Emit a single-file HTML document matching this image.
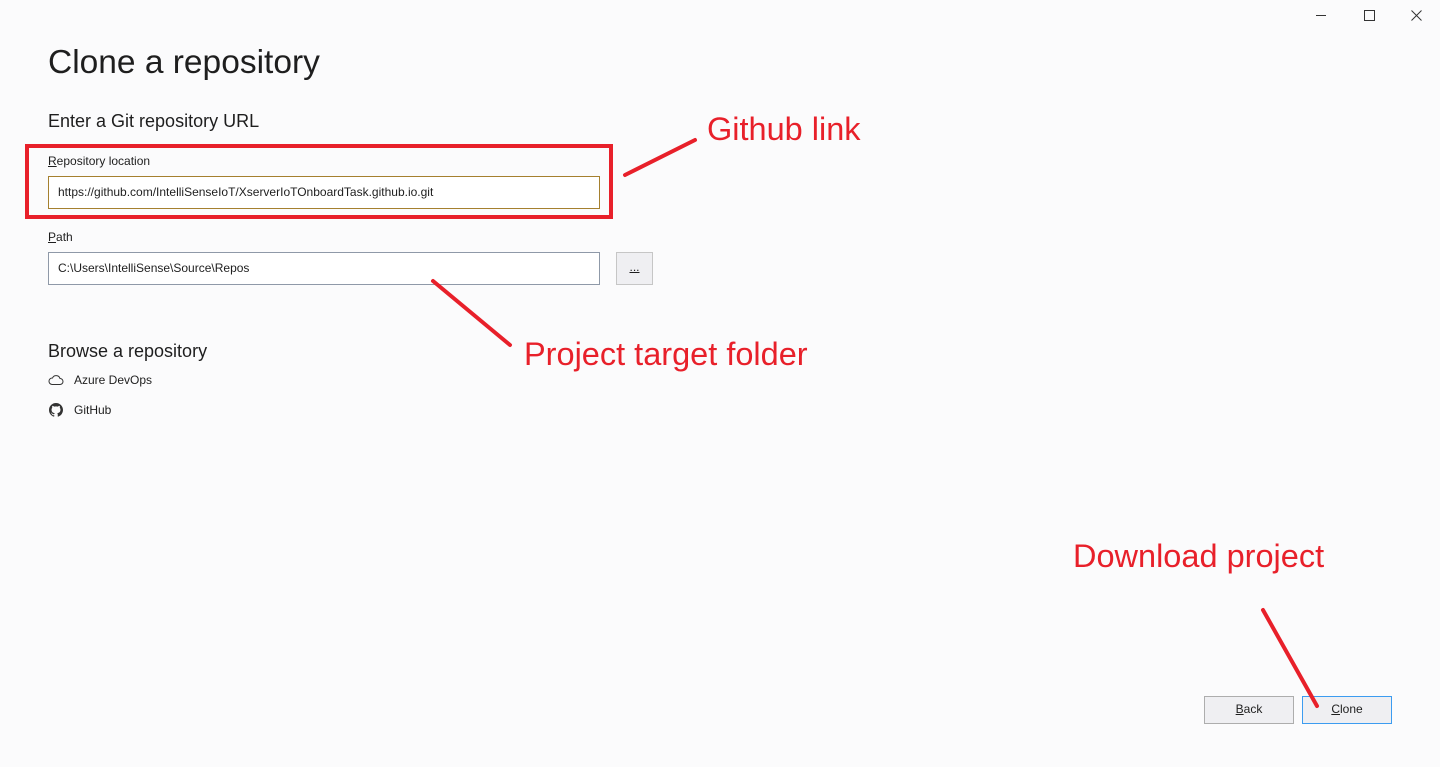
<!DOCTYPE html>
<html><head><style>
body{margin:0;width:1440px;height:767px;background:#fbfbfc;font-family:"Liberation Sans",sans-serif;color:#1e1e1e;position:relative;overflow:hidden}
.a{position:absolute;white-space:nowrap}
.in{position:absolute;background:#fff;box-sizing:border-box;font-size:12px;padding-left:9px;line-height:30px}
.btn{position:absolute;box-sizing:border-box;background:#efeff2;font-size:12px;text-align:center;line-height:25px}
.red{color:#e8202a;font-size:32.5px}
</style></head><body>
<div class="a" style="left:1316px;top:15px;width:10px;border-top:1px solid #333"></div>
<div class="a" style="left:1364px;top:10px;width:9px;height:9px;border:1px solid #333"></div>
<svg class="a" style="left:1411px;top:10px" width="11" height="11"><path d="M0.5 0.5L10.5 10.5M10.5 0.5L0.5 10.5" stroke="#333" stroke-width="1"/></svg>
<div class="a" style="left:48px;top:44px;font-size:33.5px">Clone a repository</div>
<div class="a" style="left:48px;top:111px;font-size:18px">Enter a Git repository URL</div>
<div class="a" style="left:25px;top:144px;width:580px;height:67px;border:4px solid #e8202a"></div>
<div class="a" style="left:48px;top:154px;font-size:12px"><u>R</u>epository location</div>
<div class="in" style="left:48px;top:176px;width:552px;height:33px;border:1px solid #a5802f">https://github.com/IntelliSenseIoT/XserverIoTOnboardTask.github.io.git</div>
<div class="a" style="left:48px;top:230px;font-size:12px"><u>P</u>ath</div>
<div class="in" style="left:48px;top:252px;width:552px;height:33px;border:1px solid #8f99a8">C:\Users\IntelliSense\Source\Repos</div>
<div class="btn" style="left:616px;top:252px;width:37px;height:33px;border:1px solid #c6c6c6;line-height:28px"><u>...</u></div>
<div class="a" style="left:48px;top:341px;font-size:18px">Browse a repository</div>
<svg class="a" style="left:48px;top:374px" width="16" height="12" viewBox="0 0 16 12"><path d="M4 10.5h8a3 3 0 0 0 0-6 4 4 0 0 0-7.5-.5A3.2 3.2 0 0 0 4 10.5z" fill="none" stroke="#333" stroke-width="1"/></svg>
<div class="a" style="left:74px;top:373px;font-size:12px">Azure DevOps</div>
<svg class="a" style="left:49px;top:403px" width="14" height="14" viewBox="0 0 16 16"><path fill="#333" d="M8 0C3.58 0 0 3.580 0 8c0 3.54 2.29 6.53 5.47 7.59.4.07.55-.17.55-.38v-1.330c-2.23.48-2.7-1.07-2.7-1.07-.36-.93-.89-1.17-.89-1.17-.73-.5.06-.49.06-.49.8.06 1.23.83 1.23.83.72 1.22 1.87.87 2.33.66.07-.52.28-.87.51-1.07-1.78-.2-3.65-.89-3.65-3.95 0-.87.31-1.59.82-2.15-.08-.2-.36-1.02.08-2.12 0 0 .67-.21 2.2.82a7.6 7.6 0 0 1 4 0c1.53-1.04 2.2-.82 2.2-.82.44 1.1.16 1.92.08 2.12.51.56.82 1.27.82 2.15 0 3.07-1.87 3.75-3.65 3.95.29.25.54.73.54 1.48v2.2c0 .21.15.46.55.38A8 8 0 0 0 16 8c0-4.42-3.58-8-8-8z"/></svg>
<div class="a" style="left:74px;top:403px;font-size:12px">GitHub</div>
<div class="btn" style="left:1204px;top:696px;width:90px;height:28px;border:1px solid #adadad"><u>B</u>ack</div>
<div class="btn" style="left:1302px;top:696px;width:90px;height:28px;border:1px solid #3c9cf0"><u>C</u>lone</div>
<svg class="a" style="left:0;top:0" width="1440" height="767"><g stroke="#e8202a" stroke-width="4" stroke-linecap="round"><line x1="625" y1="175" x2="695" y2="140"/><line x1="433" y1="281" x2="510" y2="345"/><line x1="1263" y1="610" x2="1317" y2="706"/></g></svg>
<div class="a red" style="left:707px;top:111px">Github link</div>
<div class="a red" style="left:524px;top:336px">Project target folder</div>
<div class="a red" style="left:1073px;top:538px">Download project</div>
</body></html>
